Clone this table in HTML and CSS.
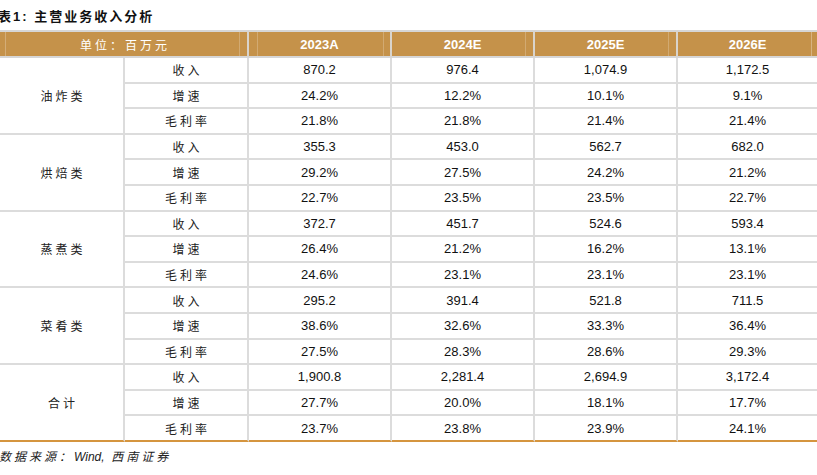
FILE: index.html
```html
<!DOCTYPE html>
<html lang="zh-CN">
<head>
<meta charset="utf-8">
<title>主营业务收入分析</title>
<link rel="stylesheet" href="styles.css">
</head>
<body>
<div class="title">表1: 主营业务收入分析</div>
<table class="data">
  <colgroup>
    <col class="c-cat"><col class="c-met"><col class="c-yr"><col class="c-yr"><col class="c-yr"><col class="c-last">
  </colgroup>
  <thead>
    <tr>
      <th colspan="2" class="unit"><span class="cjk">单位：百万元</span></th>
      <th class="y first">2023A</th>
      <th class="y">2024E</th>
      <th class="y">2025E</th>
      <th class="y last">2026E</th>
    </tr>
  </thead>
  <tbody>
    <tr><td rowspan="3" class="cat">油炸类</td><td class="met">收入</td><td>870.2</td><td>976.4</td><td>1,074.9</td><td class="last">1,172.5</td></tr>
    <tr><td class="met">增速</td><td>24.2%</td><td>12.2%</td><td>10.1%</td><td class="last">9.1%</td></tr>
    <tr><td class="met">毛利率</td><td>21.8%</td><td>21.8%</td><td>21.4%</td><td class="last">21.4%</td></tr>

    <tr><td rowspan="3" class="cat">烘焙类</td><td class="met">收入</td><td>355.3</td><td>453.0</td><td>562.7</td><td class="last">682.0</td></tr>
    <tr><td class="met">增速</td><td>29.2%</td><td>27.5%</td><td>24.2%</td><td class="last">21.2%</td></tr>
    <tr><td class="met">毛利率</td><td>22.7%</td><td>23.5%</td><td>23.5%</td><td class="last">22.7%</td></tr>

    <tr><td rowspan="3" class="cat">蒸煮类</td><td class="met">收入</td><td>372.7</td><td>451.7</td><td>524.6</td><td class="last">593.4</td></tr>
    <tr><td class="met">增速</td><td>26.4%</td><td>21.2%</td><td>16.2%</td><td class="last">13.1%</td></tr>
    <tr><td class="met">毛利率</td><td>24.6%</td><td>23.1%</td><td>23.1%</td><td class="last">23.1%</td></tr>

    <tr><td rowspan="3" class="cat">菜肴类</td><td class="met">收入</td><td>295.2</td><td>391.4</td><td>521.8</td><td class="last">711.5</td></tr>
    <tr><td class="met">增速</td><td>38.6%</td><td>32.6%</td><td>33.3%</td><td class="last">36.4%</td></tr>
    <tr><td class="met">毛利率</td><td>27.5%</td><td>28.3%</td><td>28.6%</td><td class="last">29.3%</td></tr>

    <tr class="end"><td rowspan="3" class="cat">合计</td><td class="met">收入</td><td>1,900.8</td><td>2,281.4</td><td>2,694.9</td><td class="last">3,172.4</td></tr>
    <tr class="end"><td class="met">增速</td><td>27.7%</td><td>20.0%</td><td>18.1%</td><td class="last">17.7%</td></tr>
    <tr class="end final"><td class="met">毛利率</td><td>23.7%</td><td>23.8%</td><td>23.9%</td><td class="last">24.1%</td></tr>
  </tbody>
</table>
<div class="source"><span class="cjk">数据来源：</span>Wind,&nbsp; <span class="cjk">西南证券</span></div>
</body>
</html>
```

FILE: styles.css
```css
html, body {
  margin: 0;
  padding: 0;
  background: #ffffff;
}

body {
  width: 817px;
  height: 475px;
  overflow: hidden;
  font-family: "Liberation Sans", Arial, "Noto Sans CJK SC", sans-serif;
  color: #111111;
}

.title {
  height: 30px;
  box-sizing: border-box;
  padding-top: 7px;
  margin-left: -2px;
  font-family: "Liberation Sans", "Noto Sans CJK SC", sans-serif;
  font-weight: bold;
  font-size: 13px;
  line-height: 20px;
  letter-spacing: 2px;
  color: #111111;
  white-space: nowrap;
}

.data {
  border-collapse: separate;
  border-spacing: 0;
  table-layout: fixed;
  width: 817px;
}

.c-cat { width: 125px; }
.c-met { width: 124px; }
.c-yr { width: 143px; }
.c-last { width: 139px; }

.data th {
  height: 28px;
  box-sizing: border-box;
  padding: 0;
  background-color: #c5924a;
  color: #ffffff;
  font-weight: bold;
  font-size: 13px;
  text-align: center;
  vertical-align: middle;
  border-top: 2px solid #d6d6d6;
  border-bottom: 2px solid #d6d6d6;
  border-right: 2px solid #d9d4cc;
  background-image: linear-gradient(to right,
    transparent calc(100% - 8px),
    rgba(255, 255, 255, 0.22) calc(100% - 8px),
    rgba(255, 255, 255, 0.22) calc(100% - 7px),
    transparent calc(100% - 7px));
}

.data th.unit {
  font-weight: normal;
  font-size: 12px;
  background-image:
    linear-gradient(to right,
      transparent 5px,
      rgba(255, 255, 255, 0.25) 5px,
      rgba(255, 255, 255, 0.25) 6px,
      transparent 6px),
    linear-gradient(to right,
      transparent calc(100% - 8px),
      rgba(255, 255, 255, 0.22) calc(100% - 8px),
      rgba(255, 255, 255, 0.22) calc(100% - 7px),
      transparent calc(100% - 7px));
}

.data th.first {
  background-image:
    linear-gradient(to right,
      transparent 8px,
      rgba(255, 255, 255, 0.22) 8px,
      rgba(255, 255, 255, 0.22) 9px,
      transparent 9px),
    linear-gradient(to right,
      transparent calc(100% - 7px),
      rgba(255, 255, 255, 0.22) calc(100% - 7px),
      rgba(255, 255, 255, 0.22) calc(100% - 6px),
      transparent calc(100% - 6px));
}

.data th.last {
  border-right: none;
  background-image: linear-gradient(to right,
    transparent 133px,
    rgba(255, 255, 255, 0.3) 133px,
    rgba(255, 255, 255, 0.3) 134px,
    transparent 134px);
}

.unit .cjk {
  letter-spacing: 3px;
  padding-left: 3px;
}

.data tbody tr {
  height: 25.6px;
}

.data td {
  padding: 0;
  box-sizing: border-box;
  text-align: center;
  vertical-align: middle;
  font-size: 13px;
  color: #111111;
  border-right: 2px solid #dcdcdc;
  border-bottom: 2px solid #dcdcdc;
  white-space: nowrap;
}

.data td.last {
  border-right: none;
}

.data td.cat,
.data td.met {
  font-family: "Noto Sans CJK SC", sans-serif;
  font-size: 12px;
  letter-spacing: 3px;
  padding-left: 3px;
  color: #222222;
}

.data tr.final td,
.data tr.end td.cat {
  border-bottom: 2px solid #d5953f;
}

.source {
  margin-top: 4px;
  margin-left: -1px;
  font-style: italic;
  font-size: 12px;
  line-height: 20px;
  color: #222222;
  white-space: nowrap;
}

.source .cjk {
  font-family: "Noto Sans CJK SC", sans-serif;
  letter-spacing: 3px;
}
```
